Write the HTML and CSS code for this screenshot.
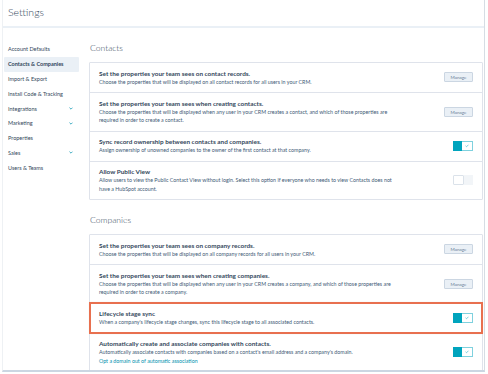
FILE: index.html
```html
<!DOCTYPE html>
<html lang="en">
<head>
    <meta charset="UTF-8">
    <meta name="viewport" content="width=device-width, initial-scale=1.0">
    <title>Settings</title>
    <link rel="stylesheet" href="styles.css">
</head>
<body>
    <div class="page">
        <header class="top-bar">
            <h1 class="page-title">Settings</h1>
        </header>

        <div class="layout">
            <nav class="sidebar">
                <ul class="nav-list">
                    <li class="nav-item">Account Defaults</li>
                    <li class="nav-item active">Contacts &amp; Companies</li>
                    <li class="nav-item">Import &amp; Export</li>
                    <li class="nav-item">Install Code &amp; Tracking</li>
                    <li class="nav-item">Integrations <svg class="chevron" viewBox="0 0 6 4"><polyline points="0.7,0.7 3,3 5.3,0.7"/></svg></li>
                    <li class="nav-item">Marketing <svg class="chevron" viewBox="0 0 6 4"><polyline points="0.7,0.7 3,3 5.3,0.7"/></svg></li>
                    <li class="nav-item">Properties</li>
                    <li class="nav-item">Sales <svg class="chevron" viewBox="0 0 6 4"><polyline points="0.7,0.7 3,3 5.3,0.7"/></svg></li>
                    <li class="nav-item">Users &amp; Teams</li>
                </ul>
            </nav>

            <main class="content">
                <section class="settings-section">
                    <h2 class="section-title">Contacts</h2>
                    <div class="card">
                        <div class="setting-row">
                            <div class="setting-text">
                                <div class="setting-name">Set the properties your team sees on contact records.</div>
                                <p class="setting-desc">Choose the properties that will be displayed on all contact records for all users in your CRM.</p>
                            </div>
                            <button class="btn-manage">Manage</button>
                        </div>
                        <div class="setting-row">
                            <div class="setting-text">
                                <div class="setting-name">Set the properties your team sees when creating contacts.</div>
                                <p class="setting-desc">Choose the properties that will be displayed when any user in your CRM creates a contact, and which of those properties are required in order to create a contact.</p>
                            </div>
                            <button class="btn-manage">Manage</button>
                        </div>
                        <div class="setting-row">
                            <div class="setting-text">
                                <div class="setting-name">Sync record ownership between contacts and companies.</div>
                                <p class="setting-desc">Assign ownership of unowned companies to the owner of the first contact at that company.</p>
                            </div>
                            <span class="toggle on"><span class="toggle-knob"></span><span class="toggle-track"><svg class="check" viewBox="0 0 6 5"><polyline points="0.8,2.6 2.3,4 5.2,1"/></svg></span></span>
                        </div>
                        <div class="setting-row">
                            <div class="setting-text">
                                <div class="setting-name">Allow Public View</div>
                                <p class="setting-desc">Allow users to view the Public Contact View without login. Select this option if everyone who needs to view Contacts does not have a HubSpot account.</p>
                            </div>
                            <span class="toggle off"><span class="toggle-knob"></span><span class="toggle-track"></span></span>
                        </div>
                    </div>
                </section>

                <section class="settings-section">
                    <h2 class="section-title">Companies</h2>
                    <div class="card">
                        <div class="setting-row">
                            <div class="setting-text">
                                <div class="setting-name">Set the properties your team sees on company records.</div>
                                <p class="setting-desc">Choose the properties that will be displayed on all company records for all users in your CRM.</p>
                            </div>
                            <button class="btn-manage">Manage</button>
                        </div>
                        <div class="setting-row">
                            <div class="setting-text">
                                <div class="setting-name">Set the properties your team sees when creating companies.</div>
                                <p class="setting-desc">Choose the properties that will be displayed when any user in your CRM creates a company, and which of those properties are required in order to create a company.</p>
                            </div>
                            <button class="btn-manage">Manage</button>
                        </div>
                        <div class="setting-row highlighted">
                            <div class="setting-text">
                                <div class="setting-name">Lifecycle stage sync</div>
                                <p class="setting-desc">When a company's lifecycle stage changes, sync this lifecycle stage to all associated contacts.</p>
                            </div>
                            <span class="toggle on"><span class="toggle-knob"></span><span class="toggle-track"><svg class="check" viewBox="0 0 6 5"><polyline points="0.8,2.6 2.3,4 5.2,1"/></svg></span></span>
                        </div>
                        <div class="setting-row">
                            <div class="setting-text">
                                <div class="setting-name">Automatically create and associate companies with contacts.</div>
                                <p class="setting-desc">Automatically associate contacts with companies based on a contact's email address and a company's domain.</p>
                                <a class="setting-link" href="#">Opt a domain out of automatic association</a>
                            </div>
                            <span class="toggle on"><span class="toggle-knob"></span><span class="toggle-track"><svg class="check" viewBox="0 0 6 5"><polyline points="0.8,2.6 2.3,4 5.2,1"/></svg></span></span>
                        </div>
                    </div>
                </section>
            </main>
        </div>
    </div>
</body>
</html>
```

FILE: styles.css
```css
:root {
    --text-primary: #33475b;
    --text-secondary: #425b76;
    --teal: #00a4bd;
    --link: #0091ae;
    --border-color: #dfe3eb;
    --light-bg: #eaf0f6;
    --highlight: #e8704f;
}

* {
    margin: 0;
    padding: 0;
    box-sizing: border-box;
}

body {
    background-color: #fff;
    color: var(--text-primary);
    font-family: Lato, 'Open Sans', sans-serif;
}

.page {
    margin-left: 2px;
    width: 483px;
    height: 372px;
    border-left: 1px solid #eef1f4;
    border-right: 1px solid #d6dde4;
    border-bottom: 2px solid #cbd6e2;
    overflow: hidden;
}

.top-bar {
    height: 28px;
    padding: 4px 0 0 5px;
    border-bottom: 2px solid var(--light-bg);
}

.page-title {
    font-size: 10.5px;
    font-weight: 300;
    line-height: 16px;
    color: var(--text-primary);
}

.layout {
    display: flex;
}

.sidebar {
    width: 76px;
    padding: 14px 0 0 1px;
    flex-shrink: 0;
}

.nav-list {
    list-style: none;
}

.nav-item {
    display: flex;
    align-items: center;
    justify-content: space-between;
    height: 14.8px;
    padding: 0 6px 0 4px;
    font-size: 5.5px;
    color: var(--text-primary);
    border-radius: 1px;
}

.nav-item.active {
    background-color: var(--light-bg);
    font-weight: 700;
}

.chevron {
    width: 4px;
    height: 3px;
    fill: none;
    stroke: var(--link);
    stroke-width: 1.1;
}

.content {
    flex: 1;
    padding: 14px 1px 0 10px;
}

.settings-section + .settings-section {
    margin-top: 14px;
}

.section-title {
    font-size: 8.6px;
    font-weight: 300;
    line-height: 12px;
    margin-bottom: 8px;
    padding-left: 1px;
    color: var(--text-primary);
}

.card {
    border: 1px solid var(--border-color);
    border-radius: 1px;
}

.setting-row {
    display: flex;
    align-items: center;
    justify-content: space-between;
    padding: 5.5px 9px 6px 9px;
}

.setting-row + .setting-row {
    border-top: 1px solid var(--border-color);
}

.setting-row.highlighted {
    outline: 2px solid var(--highlight);
    outline-offset: -1px;
    box-shadow: 0 0 2px rgba(0, 0, 0, 0.25);
    position: relative;
}

.setting-text {
    max-width: 300px;
}

.setting-name {
    font-size: 6.4px;
    font-weight: 700;
    line-height: 9px;
    color: var(--text-primary);
}

.setting-desc {
    font-size: 5.3px;
    line-height: 8.5px;
    color: var(--text-secondary);
}

.setting-link {
    display: block;
    font-size: 5.3px;
    line-height: 8.5px;
    color: var(--link);
    text-decoration: none;
}

.btn-manage {
    width: 29px;
    height: 10px;
    background-color: var(--light-bg);
    border: 1px solid #cbd6e2;
    border-radius: 1px;
    font-family: inherit;
    font-size: 4.6px;
    color: #6a7f96;
    flex-shrink: 0;
}

.toggle {
    display: flex;
    width: 20px;
    height: 10px;
    flex-shrink: 0;
    margin-right: 0.5px;
}

.toggle-knob,
.toggle-track {
    flex: 1;
    display: flex;
    align-items: center;
    justify-content: center;
}

.toggle.on .toggle-knob {
    background-color: var(--teal);
}

.toggle.on .toggle-track {
    background-color: #fff;
    border: 1px solid #7fd1de;
    border-left: none;
}

.toggle.off .toggle-knob {
    background-color: #fff;
    border: 1px solid #dbe2ea;
    border-radius: 1px;
}

.toggle.off .toggle-track {
    background-color: #f2f5f8;
}

.check {
    width: 4px;
    height: 3.5px;
    fill: none;
    stroke: var(--teal);
    stroke-width: 0.8;
}
```
